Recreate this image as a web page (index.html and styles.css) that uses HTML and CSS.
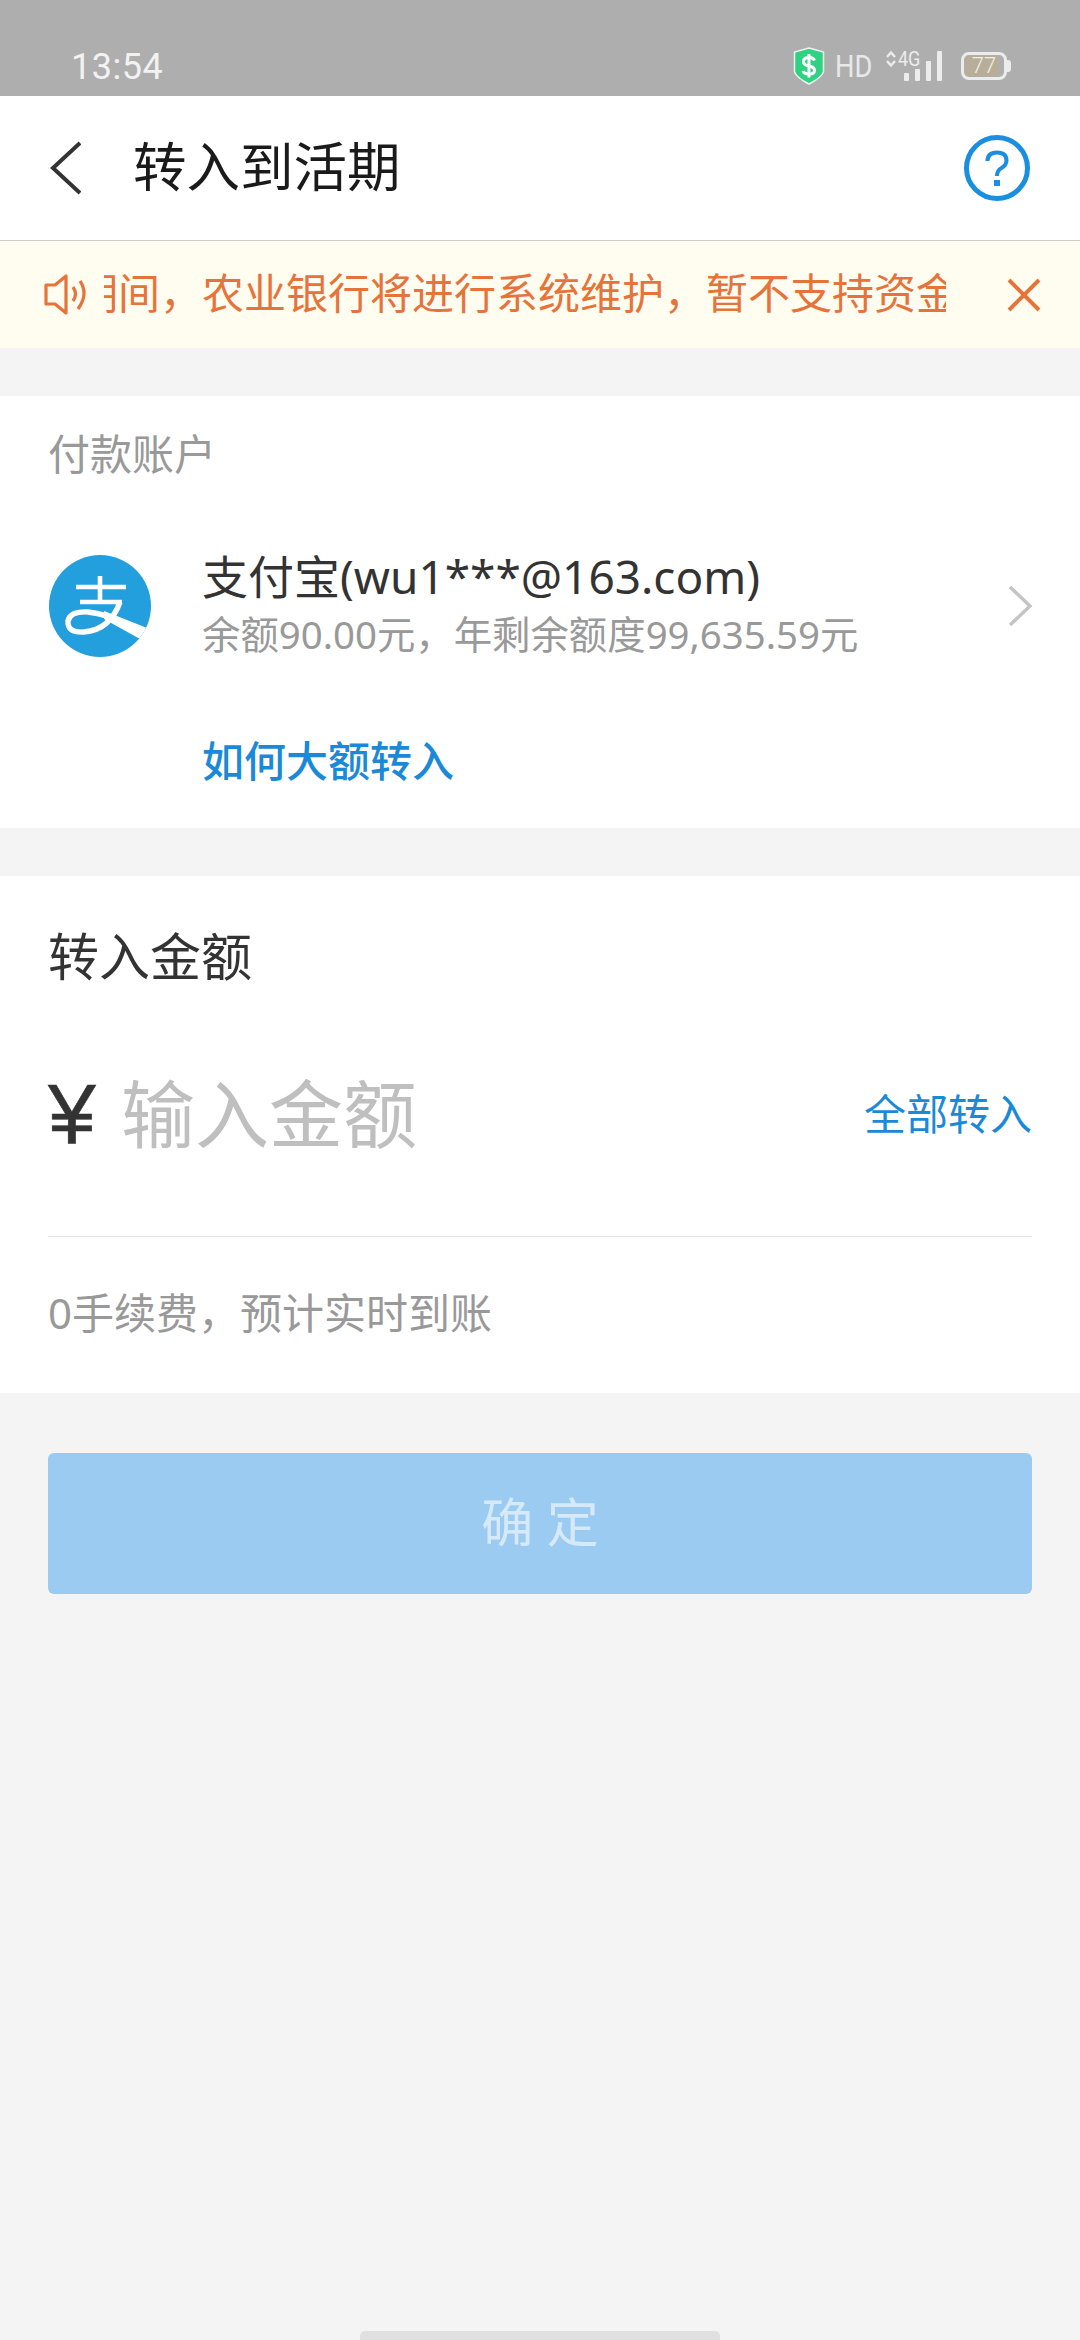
FILE: index.html
```html
<!DOCTYPE html>
<html lang="zh">
<head>
<meta charset="utf-8">
<title>转入到活期</title>
<link rel="stylesheet" href="styles.css">
</head>
<body>
<div class="screen">
  <div class="status">
    <span class="time">13:54</span>
    <div class="status-right">
      <svg class="shield" width="32" height="38" viewBox="0 0 32 38"><path d="M16 1 L30.500 5 V25 Q28 31 16 37 Q4 31 1.500 25 V5 Z" fill="#2ed282" stroke="#f0f5f0" stroke-width="1.500"/><path d="M21.500 13.500 Q20.500 10.500 16 10.500 Q10.500 10.500 10.500 14.500 Q10.500 18 16 19 Q21.500 20 21.500 23.500 Q21.500 27 16 27 Q11 27 10 24" fill="none" stroke="#fff" stroke-width="3"/><path d="M16 7 V30.500" stroke="#fff" stroke-width="3"/></svg>
      <span class="hd">HD</span>
      <svg class="updown" width="10" height="16" viewBox="0 0 10 16"><path d="M1 6 L5 1.500 L9 6 M1 10 L5 14.500 L9 10" fill="none" stroke="#ececec" stroke-width="2.400"/></svg>
      <div class="signal">
        <span class="net">4G</span>
        <div class="bars">
          <i class="bar b1"></i><i class="bar b2"></i><i class="bar b3"></i><i class="bar b4"></i>
        </div>
      </div>
      <div class="battery">
        <div class="batt-body"><span class="batt-fill"></span><span class="batt-num">77</span></div>
        <i class="batt-tip"></i>
      </div>
    </div>
  </div>

  <header class="nav">
    <svg class="back" width="34" height="54" viewBox="0 0 34 54"><path d="M33 2 L6 27 L33 52" fill="none" stroke="#333" stroke-width="4"/></svg>
    <h1 class="title">转入到活期</h1>
    <svg class="help" width="68" height="68" viewBox="0 0 68 68"><circle cx="34" cy="34" r="30.500" fill="none" stroke="#1a8fe0" stroke-width="5"/><path d="M24.500 27 Q24.500 18.500 34 18.500 Q43.500 18.500 43.500 26.500 Q43.500 31 38.500 34 Q34 36.500 34 42" fill="none" stroke="#1a8fe0" stroke-width="4"/><rect x="31" y="46" width="6" height="6" fill="#1a8fe0"/></svg>
  </header>

  <div class="notice">
    <svg class="speaker" width="46" height="42" viewBox="0 0 46 42"><path d="M2 11 H11 L22 2 V39 L11 30 H2 Z" fill="none" stroke="#e6733a" stroke-width="3.200" stroke-linejoin="round"/><path d="M29 13 Q34 20 29 27 M36 7 Q45 20 34 35" fill="none" stroke="#e6733a" stroke-width="3.200"/></svg>
    <div class="marquee"><span class="marquee-text">期间，农业银行将进行系统维护，暂不支持资金</span></div>
    <svg class="close" width="36" height="36" viewBox="0 0 36 36"><path d="M3 3 L33 33 M33 3 L3 33" stroke="#e6733a" stroke-width="4"/></svg>
  </div>

  <section class="card account">
    <div class="label">付款账户</div>
    <div class="acct-row">
      <svg class="logo" width="104" height="104" viewBox="0 0 104 104">
        <defs><clipPath id="logo-clip"><circle cx="52" cy="52" r="51"/></clipPath></defs>
        <circle cx="52" cy="52" r="51" fill="#229fdc"/>
        <g clip-path="url(#logo-clip)">
          <path d="M28 33 H78 M52 22 V48 M32 48 H74" fill="none" stroke="#fff" stroke-width="4.600"/>
          <path d="M72 48 Q62 76 36 78 Q19 79 20 67 Q22 57 40 58 Q58 60 80 70" fill="none" stroke="#fff" stroke-width="5.400"/>
          <path d="M56 57 L104 76 L92 85 L56 65 Z" fill="#fff"/>
        </g>
      </svg>
      <div class="acct-info">
        <div class="acct-name">支付宝(wu1***@163.com)</div>
        <div class="acct-sub">余额90.00元，年剩余额度99,635.59元</div>
      </div>
      <svg class="chev" width="26" height="42" viewBox="0 0 26 42"><path d="M3 2 L23 21 L3 40" fill="none" stroke="#c4c4c4" stroke-width="3.400"/></svg>
    </div>
    <a class="howto">如何大额转入</a>
  </section>

  <section class="card amount">
    <div class="amount-title">转入金额</div>
    <div class="amount-row">
      <span class="yen">¥</span>
      <span class="placeholder">输入金额</span>
      <a class="all">全部转入</a>
    </div>
    <div class="fee">0手续费，预计实时到账</div>
  </section>

  <div class="action"><button class="confirm">确 定</button></div>
  <div class="home-wrap"><i class="home"></i></div>
</div>
</body>
</html>
```
FILE: styles.css
```css
* { box-sizing: border-box; margin: 0; padding: 0; }
html, body { width: 1080px; height: 2340px; overflow: hidden; }
body { font-family: "Noto Sans", "Noto Sans CJK SC", sans-serif; background: #f4f4f4; }
.screen { width: 1080px; height: 2340px; display: flex; flex-direction: column; background: #f4f4f4; }

.status { height: 96px; background: #aeaeae; display: flex; justify-content: space-between; align-items: flex-start; padding: 46px 69px 0 71px; }
.time { font-family: Roboto, sans-serif; font-size: 36px; line-height: 42px; color: #f2f2f2; letter-spacing: 0.5px; }
.status-right { display: flex; align-items: flex-start; height: 38px; margin-top: 1px; }
.shield { display: block; }
.hd { display: block; font-family: Roboto, sans-serif; font-size: 31px; line-height: 31px; color: #e8e8e8; width: 36px; margin: 4px 15px 0 10px; transform: scaleX(.88); transform-origin: left; }
.updown { display: block; margin-top: 4px; }
.signal { position: relative; width: 44px; height: 30px; margin: 4px 0 0 2px; }
.net { position: absolute; left: 0; top: -2px; font-family: Roboto, sans-serif; font-size: 20px; line-height: 20px; color: #ececec; transform: scaleX(.9); transform-origin: left; }
.bars { position: absolute; left: 6px; right: 0; bottom: 0; display: flex; align-items: flex-end; justify-content: space-between; }
.bar { display: block; width: 5px; background: #ececec; border-radius: 1px; }
.b1 { height: 8px; }
.b2 { height: 12px; }
.b3 { height: 20px; }
.b4 { height: 30px; }
.battery { display: flex; align-items: center; height: 28px; margin: 5px 0 0 19px; }
.batt-body { position: relative; width: 46px; height: 28px; border: 3px solid #ececec; border-radius: 8px; overflow: hidden; display: flex; align-items: center; justify-content: center; }
.batt-fill { position: absolute; left: 1px; top: 1px; bottom: 1px; width: 33px; background: #b8ae98; border-radius: 3px; }
.batt-num { position: relative; font-family: Roboto, sans-serif; font-size: 22px; line-height: 22px; font-weight: 300; color: #f0f0e8; }
.batt-tip { display: block; width: 4px; height: 12px; background: #ececec; border-radius: 0 3px 3px 0; }

.nav { height: 145px; background: #fff; border-bottom: 1px solid #cfcfc9; display: flex; align-items: center; padding: 0 49px 0 47px; }
.back { display: block; margin-right: 52px; }
.title { flex: 1; font-size: 53.500px; font-weight: 400; line-height: 60px; color: #1a1a1a; margin-top: -3px; }
.help { display: block; }

.notice { height: 107px; background: #fffcf0; display: flex; align-items: center; padding: 0 0 0 44px; }
.speaker { display: block; flex: none; margin-right: 14px; }
.marquee { flex: none; width: 842px; overflow: hidden; white-space: nowrap; margin-top: -3px; }
.marquee-text { display: block; margin-left: -28px; font-size: 42px; line-height: 56px; color: #e6733a; }
.close { display: block; flex: none; margin-left: 60px; }

.card { background: #fff; }
.account { margin-top: 48px; height: 432px; padding: 33px 47px 0 48px; }
.label { font-size: 42px; line-height: 50px; color: #999; }
.acct-row { display: flex; align-items: center; margin-top: 71px; }
.logo { display: block; flex: none; }
.acct-info { flex: 1; margin-left: 50px; padding-bottom: 2px; }
.acct-name { font-size: 46px; line-height: 56px; color: #333; margin-top: -2px; }
.acct-sub { font-size: 38.400px; line-height: 52px; color: #999; margin-top: 4px; }
.chev { display: block; flex: none; }
.howto { display: block; margin: 74px 0 0 154px; font-size: 42px; line-height: 50px; font-weight: 500; color: #1a8ad8; }

.amount { margin-top: 48px; height: 517px; padding: 50px 48px 0; }
.amount-title { font-size: 51px; line-height: 60px; color: #333; }
.amount-row { display: flex; align-items: center; height: 251px; padding-top: 6px; border-bottom: 1px solid #e6e6e6; }
.yen { width: 73px; font-family: "Liberation Sans", sans-serif; font-size: 86px; line-height: 90px; color: #333; -webkit-text-stroke: 0.500px #333; }
.placeholder { flex: 1; font-size: 74px; line-height: 90px; color: #bfbfbf; }
.all { font-size: 42px; line-height: 50px; color: #1a8ad8; }
.fee { font-size: 42px; line-height: 50px; color: #999; margin-top: 51px; }

.action { padding: 60px 48px 0; }
.confirm { display: block; width: 984px; height: 141px; border: 0; border-radius: 6px; background: #9bcbf0; color: #d6e9f8; font-family: "Noto Sans", "Noto Sans CJK SC", sans-serif; font-size: 52px; line-height: 60px; white-space: pre; padding-bottom: 3px; }

.home-wrap { flex: 1; display: flex; justify-content: center; align-items: flex-end; }
.home { display: block; width: 360px; height: 9px; background: #e0e0e0; border-radius: 5px 5px 0 0; }
```
